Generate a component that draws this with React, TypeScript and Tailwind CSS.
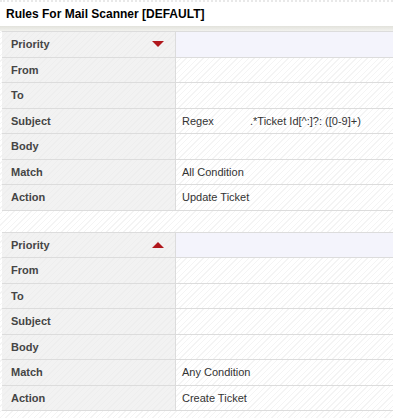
import React from 'react'

type Row = { label: string; value?: React.ReactNode; sort?: 'down' | 'up' }

const hatchWhite =
  'bg-[repeating-linear-gradient(135deg,#ffffff_0px,#ffffff_3px,#f4f4f4_3px,#f4f4f4_4px)]'
const hatchGray =
  'bg-[repeating-linear-gradient(135deg,#f2f2f2_0px,#f2f2f2_3px,#eeeeee_3px,#eeeeee_4px)]'

function Triangle({ dir }: { dir: 'down' | 'up' }) {
  return (
    <svg width="12" height="6" viewBox="0 0 12 6" className="shrink-0">
      {dir === 'down' ? (
        <polygon points="0,0 12,0 6,6" fill="#b0171c" />
      ) : (
        <polygon points="6,0 12,6 0,6" fill="#b0171c" />
      )}
    </svg>
  )
}

function RuleTable({ rows }: { rows: Row[] }) {
  return (
    <div className="ml-[2px] border-t border-[#dcdcdc]">
      {rows.map(r => (
        <div key={r.label} className="grid grid-cols-[174px_1fr] h-[25.5px] border-b border-[#dcdcdc]">
          <div className={`flex items-center justify-between pl-[9px] pr-[11px] border-r border-[#dcdcdc] ${hatchGray}`}>
            <span className="font-bold text-[11px] text-[#454545]">{r.label}</span>
            {r.sort && <Triangle dir={r.sort} />}
          </div>
          <div
            className={`flex items-center pl-[6px] text-[11px] text-[#333] ${r.sort ? 'bg-[#f4f4fc]' : hatchWhite}`}
          >
            {r.value}
          </div>
        </div>
      ))}
    </div>
  )
}

export default function App() {
  const first: Row[] = [
    { label: 'Priority', sort: 'down' },
    { label: 'From' },
    { label: 'To' },
    {
      label: 'Subject',
      value: (
        <>
          <span className="w-[68px]">Regex</span>
          <span>.*Ticket Id[^:]?: ([0-9]+)</span>
        </>
      ),
    },
    { label: 'Body' },
    { label: 'Match', value: 'All Condition' },
    { label: 'Action', value: 'Update Ticket' },
  ]
  const second: Row[] = [
    { label: 'Priority', sort: 'up' },
    { label: 'From' },
    { label: 'To' },
    { label: 'Subject' },
    { label: 'Body' },
    { label: 'Match', value: 'Any Condition' },
    { label: 'Action', value: 'Create Ticket' },
  ]

  return (
    <div className={`w-[393px] h-[418px] overflow-hidden font-['Liberation_Sans',Arial,sans-serif] ${hatchWhite}`}>
      <div className="border-t-2 border-dotted border-[#e8e8e8] bg-white h-[26px] flex items-center pl-[6px]">
        <h1 className="font-bold text-[12px] text-black">Rules For Mail Scanner [DEFAULT]</h1>
      </div>
      <div className="h-[5px] bg-gradient-to-b from-[#e2e2dc] to-[#f2f2ee]" />
      <RuleTable rows={first} />
      <div className="h-[21px]" />
      <RuleTable rows={second} />
    </div>
  )
}
